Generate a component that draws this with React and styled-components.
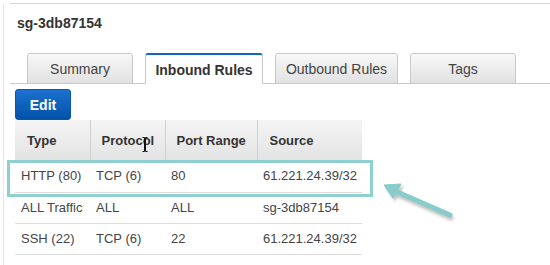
import React from 'react';
import styled, { createGlobalStyle } from 'styled-components';

const GlobalStyle = createGlobalStyle`
  html, body {
    margin: 0;
    padding: 0;
    background: #fff;
  }
  body {
    font-family: "Liberation Sans", Arial, sans-serif;
    color: #444;
  }
`;

const Page = styled.div`
  position: relative;
  width: 550px;
  height: 265px;
  overflow: hidden;
  background: #fff;
`;

const Panel = styled.div`
  margin-left: 3px;
  height: 265px;
  border-left: 1px solid #e6e6e6;
`;

const TopRule = styled.div`
  margin: 3px 0 0 6px;
  border-top: 1px solid #d6d6d6;
`;

const Title = styled.h2`
  margin: 11px 0 0 13px;
  font-size: 14px;
  line-height: 16px;
  font-weight: bold;
  color: #333;
`;

const TabBar = styled.div`
  display: flex;
  gap: 12px;
  margin: 22px 0 0 6px;
  padding-left: 17px;
  border-bottom: 1px solid #c8c8c8;
`;

const Tab = styled.div`
  box-sizing: border-box;
  width: ${(p) => p.$w}px;
  height: 31px;
  margin-bottom: -1px;
  display: flex;
  align-items: center;
  justify-content: center;
  font-size: 14px;
  border: 1px solid #c8c8c8;
  border-radius: 3px 3px 0 0;
  color: ${(p) => (p.$active ? '#333' : '#444')};
  font-weight: ${(p) => (p.$active ? 'bold' : 'normal')};
  background: ${(p) => (p.$active ? '#fff' : 'linear-gradient(#f8f8f8, #e1e1e1)')};
  border-top: ${(p) => (p.$active ? '2px solid #1166c0' : '1px solid #c8c8c8')};
  border-bottom-color: ${(p) => (p.$active ? '#fff' : '#c8c8c8')};
  padding-top: ${(p) => (p.$active ? '1px' : '0')};
`;

const EditButton = styled.button`
  display: block;
  box-sizing: border-box;
  width: 56px;
  height: 31px;
  margin: 5px 0 0 11px;
  padding: 0;
  border: 1px solid #0a56a8;
  border-radius: 3px;
  background: linear-gradient(#1b72d0, #0252a8);
  color: #fff;
  font-family: "Liberation Sans", Arial, sans-serif;
  font-size: 14px;
  font-weight: bold;
`;

const TableWrap = styled.div`
  position: relative;
  margin-left: 11px;
  width: 347px;
`;

const Table = styled.table`
  border-collapse: collapse;
  table-layout: fixed;
  width: 347px;
  font-size: 13px;
`;

const HeadCell = styled.th`
  box-sizing: border-box;
  width: ${(p) => p.$w}px;
  height: 40px;
  padding: 0 0 0 ${(p) => p.$pad || 12}px;
  text-align: left;
  font-weight: bold;
  color: #333;
  background: linear-gradient(#f4f4f4, #e3e3e3);
  border-left: 1px solid #d0d0d0;
  &:first-child {
    border-left: none;
  }
`;

const Row = styled.tr`
  height: ${(p) => p.$h}px;
  border-bottom: 1px solid #dcdcdc;
`;

const Cell = styled.td`
  padding: 0 0 0 6px;
  color: #444;
  white-space: nowrap;
`;

const Highlight = styled.div`
  position: absolute;
  left: -8px;
  top: 40px;
  width: 366px;
  height: 37px;
  box-sizing: border-box;
  border: 3px solid #8ecfcf;
  pointer-events: none;
`;

const Overlay = styled.svg`
  position: absolute;
  left: 0;
  top: 0;
  pointer-events: none;
`;

const rules = [
  ['HTTP (80)', 'TCP (6)', '80', '61.221.24.39/32'],
  ['ALL Traffic', 'ALL', 'ALL', 'sg-3db87154'],
  ['SSH (22)', 'TCP (6)', '22', '61.221.24.39/32'],
];

const rowHeights = [32, 31, 31];

export default function App() {
  return (
    <Page>
      <GlobalStyle />
      <Panel>
        <TopRule />
        <Title>sg-3db87154</Title>
        <TabBar>
          <Tab $w={106}>Summary</Tab>
          <Tab $w={118} $active>Inbound Rules</Tab>
          <Tab $w={123}>Outbound Rules</Tab>
          <Tab $w={106}>Tags</Tab>
        </TabBar>
        <EditButton>Edit</EditButton>
        <TableWrap>
          <Table>
            <thead>
              <tr>
                <HeadCell $w={75}>Type</HeadCell>
                <HeadCell $w={75} $pad={11}>Protocol</HeadCell>
                <HeadCell $w={92} $pad={11}>Port Range</HeadCell>
                <HeadCell $w={105}>Source</HeadCell>
              </tr>
            </thead>
            <tbody>
              {rules.map((r, i) => (
                <Row key={i} $h={rowHeights[i]}>
                  {r.map((c, j) => (
                    <Cell key={j}>{c}</Cell>
                  ))}
                </Row>
              ))}
            </tbody>
          </Table>
          <Highlight />
        </TableWrap>
      </Panel>

      {/* callout arrow + text cursor */}
      <Overlay width="550" height="265" viewBox="0 0 550 265">
        <defs>
          <filter id="blur" x="-20%" y="-20%" width="140%" height="140%">
            <feGaussianBlur stdDeviation="1.5" />
          </filter>
        </defs>
        <g filter="url(#blur)" fill="#9a9a9a" stroke="#9a9a9a" opacity="0.6">
          <line x1="396" y1="194" x2="451" y2="218" strokeWidth="5" strokeLinecap="round" />
          <polygon points="386,188 403,187 395,201" />
        </g>
        <g fill="#87cbcb" stroke="#87cbcb">
          <line x1="395" y1="191" x2="450" y2="215" strokeWidth="5" strokeLinecap="round" />
          <polygon points="384,185 401,184 393,198" strokeWidth="1" strokeLinejoin="round" />
        </g>
        <g stroke="#111" strokeWidth="1" fill="none">
          <path d="M142.5 137.5h2v14h-2M147.5 137.5h-2v14h2" />
        </g>
      </Overlay>
    </Page>
  );
}
